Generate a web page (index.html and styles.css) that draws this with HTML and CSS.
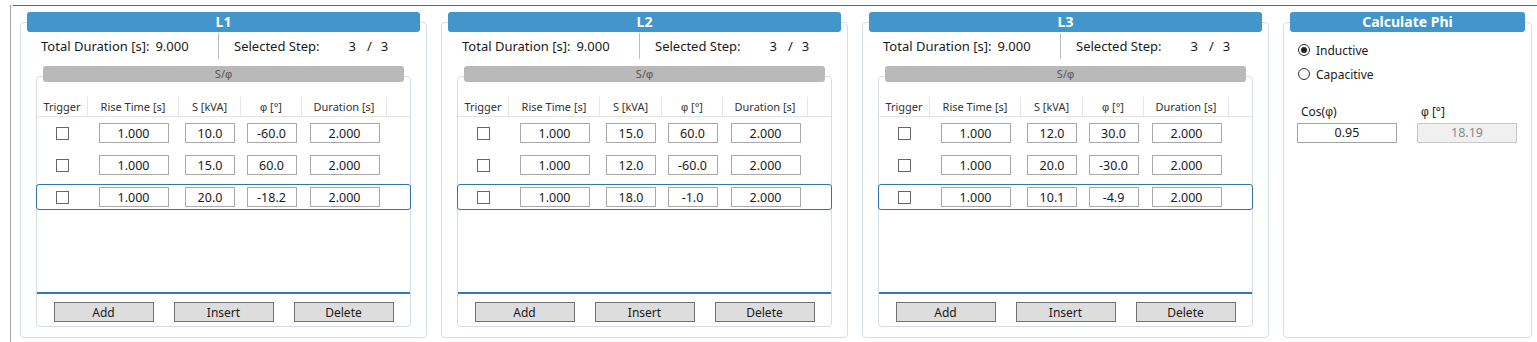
FILE: index.html
```html
<!DOCTYPE html>
<html lang="en">
<head>
	<meta charset="UTF-8">
	<title>Phase Steps</title>
	<link rel="stylesheet" href="styles.css">
</head>
<body>
	<div class="frame">
		<div class="topline"></div>
		<div class="panels">

			<!-- L1 -->
			<section class="group phase">
				<div class="group-head">L1</div>
				<div class="info">
					<div class="info-total">Total Duration [s]:<span class="val">9.000</span></div>
					<div class="info-step">Selected Step:<span class="num">3</span><span class="slash">/</span><span class="num2">3</span></div>
				</div>
				<div class="steps">
					<div class="steps-head">S/<span class="phi">φ</span></div>
					<div class="cols">
						<div>Trigger</div><div>Rise Time [s]</div><div>S [kVA]</div><div><span class="phi">φ</span> [°]</div><div>Duration [s]</div><div class="last"></div>
					</div>
					<div class="rows">
						<div class="row">
							<span class="check"></span><span class="field wide">1.000</span><span class="field">10.0</span><span class="field">-60.0</span><span class="field wide">2.000</span>
						</div>
						<div class="row">
							<span class="check"></span><span class="field wide">1.000</span><span class="field">15.0</span><span class="field">60.0</span><span class="field wide">2.000</span>
						</div>
						<div class="row selected">
							<span class="check"></span><span class="field wide">1.000</span><span class="field">20.0</span><span class="field">-18.2</span><span class="field wide">2.000</span>
						</div>
					</div>
					<div class="buttons">
						<button>Add</button><button>Insert</button><button>Delete</button>
					</div>
				</div>
			</section>

			<!-- L2 -->
			<section class="group phase">
				<div class="group-head">L2</div>
				<div class="info">
					<div class="info-total">Total Duration [s]:<span class="val">9.000</span></div>
					<div class="info-step">Selected Step:<span class="num">3</span><span class="slash">/</span><span class="num2">3</span></div>
				</div>
				<div class="steps">
					<div class="steps-head">S/<span class="phi">φ</span></div>
					<div class="cols">
						<div>Trigger</div><div>Rise Time [s]</div><div>S [kVA]</div><div><span class="phi">φ</span> [°]</div><div>Duration [s]</div><div class="last"></div>
					</div>
					<div class="rows">
						<div class="row">
							<span class="check"></span><span class="field wide">1.000</span><span class="field">15.0</span><span class="field">60.0</span><span class="field wide">2.000</span>
						</div>
						<div class="row">
							<span class="check"></span><span class="field wide">1.000</span><span class="field">12.0</span><span class="field">-60.0</span><span class="field wide">2.000</span>
						</div>
						<div class="row selected">
							<span class="check"></span><span class="field wide">1.000</span><span class="field">18.0</span><span class="field">-1.0</span><span class="field wide">2.000</span>
						</div>
					</div>
					<div class="buttons">
						<button>Add</button><button>Insert</button><button>Delete</button>
					</div>
				</div>
			</section>

			<!-- L3 -->
			<section class="group phase">
				<div class="group-head">L3</div>
				<div class="info">
					<div class="info-total">Total Duration [s]:<span class="val">9.000</span></div>
					<div class="info-step">Selected Step:<span class="num">3</span><span class="slash">/</span><span class="num2">3</span></div>
				</div>
				<div class="steps">
					<div class="steps-head">S/<span class="phi">φ</span></div>
					<div class="cols">
						<div>Trigger</div><div>Rise Time [s]</div><div>S [kVA]</div><div><span class="phi">φ</span> [°]</div><div>Duration [s]</div><div class="last"></div>
					</div>
					<div class="rows">
						<div class="row">
							<span class="check"></span><span class="field wide">1.000</span><span class="field">12.0</span><span class="field">30.0</span><span class="field wide">2.000</span>
						</div>
						<div class="row">
							<span class="check"></span><span class="field wide">1.000</span><span class="field">20.0</span><span class="field">-30.0</span><span class="field wide">2.000</span>
						</div>
						<div class="row selected">
							<span class="check"></span><span class="field wide">1.000</span><span class="field">10.1</span><span class="field">-4.9</span><span class="field wide">2.000</span>
						</div>
					</div>
					<div class="buttons">
						<button>Add</button><button>Insert</button><button>Delete</button>
					</div>
				</div>
			</section>

			<!-- Calculate Phi -->
			<section class="group calc">
				<div class="group-head">Calculate Phi</div>
				<div class="radios">
					<div class="radio checked"><span class="dot"></span>Inductive</div>
					<div class="radio"><span class="dot"></span>Capacitive</div>
				</div>
				<div class="calc-fields">
					<div class="calc-field">
						<div class="calc-label">Cos(<span class="phi">φ</span>)</div>
						<div class="calc-input">0.95</div>
					</div>
					<div class="calc-field">
						<div class="calc-label"><span class="phi">φ</span> [°]</div>
						<div class="calc-input readonly">18.19</div>
					</div>
				</div>
			</section>

		</div>
	</div>
</body>
</html>
```

FILE: styles.css
```css
*{margin:0;padding:0;box-sizing:border-box}
body{
	background:#fff;
	font-family:"Segoe UI","Noto Sans",sans-serif;
	color:#1a1a1a;
	overflow:hidden;
}
.phi{font-family:"Liberation Sans","DejaVu Sans",sans-serif}
.frame{
	margin-left:10px;
	height:342px;
	border-left:1px solid #a8a8a8;
}
.topline{
	margin:5px 0 0 2px;
	height:1px;
	background:#3572a8;
}
.panels{
	display:flex;
	gap:14px;
	padding:16px 0 0 9px;
}

/* group boxes */
.group{
	height:316px;
	border:1px solid #d6dee5;
	border-radius:4px;
	display:flex;
	flex-direction:column;
}
.phase{width:407px}
.calc{width:249px}
.group-head{
	margin:-11px 6px 0;
	height:20px;
	line-height:20px;
	background:#4396cb;
	border-radius:3px;
	color:#fff;
	font-weight:bold;
	font-size:14px;
	text-align:center;
}

/* total / selected */
.info{
	display:flex;
	margin-top:1px;
	height:26px;
	font-size:13px;
	line-height:26px;
}
.info-total{
	width:198px;
	padding-left:20px;
	border-right:1px solid #bdbdbd;
}
.info-total .val{margin-left:6px}
.info-step{padding-left:15px}
.info-step .num{margin-left:29px}
.info-step .slash{margin-left:11px}
.info-step .num2{margin-left:9px}

/* step list */
.steps{
	margin:17px 15px 0;
	height:251px;
	border:1px solid #d6dee5;
	border-radius:4px;
	display:flex;
	flex-direction:column;
}
.steps-head{
	margin:-11px 6px 0;
	height:16px;
	line-height:16px;
	background:#b9b9b9;
	border-radius:3px;
	color:#555;
	font-size:11px;
	text-align:center;
}
.cols,
.row{
	display:grid;
	grid-template-columns:51px 91px 62px 61px 85px 1fr;
	align-items:center;
}
.cols{
	margin-top:15px;
	height:20px;
	border-bottom:1px solid #e3e3e3;
	font-size:11px;
	color:#333;
	text-align:center;
}
.cols div{
	height:19px;
	line-height:19px;
	border-right:1px solid #e6e6e6;
}
.cols div.last{border-right:none}
.rows{
	flex:1;
	display:flex;
	flex-direction:column;
	gap:6px;
	padding-top:3px;
	border-bottom:2px solid #2b7bbd;
}
.row{
	margin:0 -1px;
	height:26px;
	border:1px solid transparent;
	border-radius:3px;
}
.row.selected{border-color:#2a77b6}
.check{
	justify-self:center;
	width:13px;
	height:13px;
	border:1px solid #666;
	background:#fff;
}
.field{
	justify-self:center;
	width:50px;
	height:20px;
	line-height:19px;
	border:1px solid #a9a9a9;
	font-size:12.5px;
	text-align:center;
}
.field.wide{width:70px}
.buttons{
	display:flex;
	justify-content:center;
	gap:20px;
	padding:8px 0 4px;
}
.buttons button{
	width:100px;
	height:20px;
	background:#dddddd;
	border:1px solid #727272;
	font-family:inherit;
	font-size:12px;
	color:#1a1a1a;
}

/* calculate phi */
.radios{
	margin-top:6px;
	padding-left:14px;
	font-size:12px;
}
.radio{
	display:flex;
	align-items:center;
	gap:6px;
	height:24px;
}
.dot{
	width:12px;
	height:12px;
	border:1px solid #333;
	border-radius:50%;
	display:flex;
	align-items:center;
	justify-content:center;
}
.radio.checked .dot::after{
	content:"";
	width:6px;
	height:6px;
	border-radius:50%;
	background:#222;
}
.calc-fields{
	display:flex;
	gap:20px;
	margin-top:18px;
	padding-left:13px;
}
.calc-field{width:100px}
.calc-label{
	height:16px;
	line-height:16px;
	padding-left:4px;
	font-size:12px;
	margin-bottom:3px;
}
.calc-input{
	height:20px;
	line-height:18px;
	border:1px solid #a3a3a3;
	font-size:12.5px;
	text-align:center;
}
.calc-input.readonly{
	background:#f0f0f0;
	border-color:#c8c8c8;
	color:#8a8a8a;
}
```
